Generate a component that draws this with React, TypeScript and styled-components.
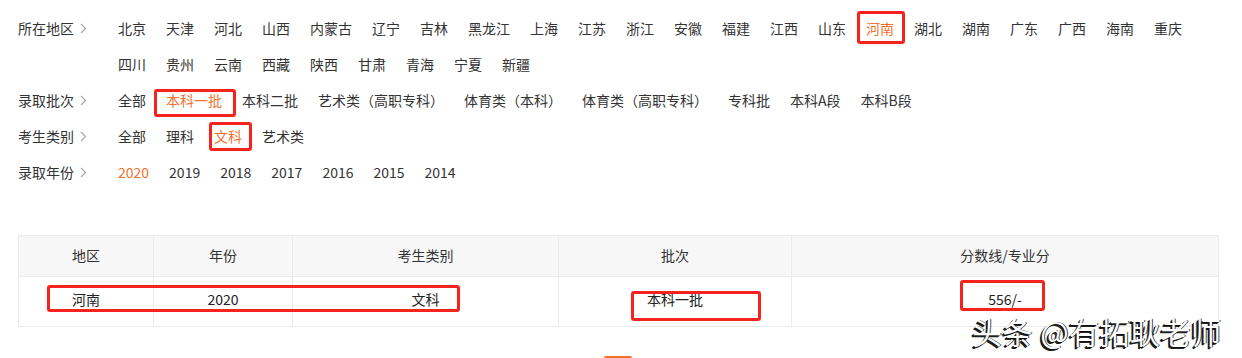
import styled, { createGlobalStyle } from "styled-components";

const GlobalStyle = createGlobalStyle`
  html, body {
    margin: 0;
    padding: 0;
    background: #fff;
  }
  body {
    font-family: "Noto Sans CJK SC", "Noto Sans", sans-serif;
    font-size: 14px;
    color: #333;
  }
`;

const orange = "#f2722c";
const markRed = "#f5231e";

const regions = [
  "北京", "天津", "河北", "山西", "内蒙古", "辽宁", "吉林", "黑龙江", "上海", "江苏",
  "浙江", "安徽", "福建", "江西", "山东", "河南", "湖北", "湖南", "广东", "广西",
  "海南", "重庆", "四川", "贵州", "云南", "西藏", "陕西", "甘肃", "青海", "宁夏", "新疆",
];
const batches = [
  "全部", "本科一批", "本科二批", "艺术类（高职专科）", "体育类（本科）",
  "体育类（高职专科）", "专科批", "本科A段", "本科B段",
];
const types = ["全部", "理科", "文科", "艺术类"];
const years = ["2020", "2019", "2018", "2017", "2016", "2015", "2014"];

const filters = [
  { label: "所在地区", items: regions, active: "河南" },
  { label: "录取批次", items: batches, active: "本科一批" },
  { label: "考生类别", items: types, active: "文科" },
  { label: "录取年份", items: years, active: "2020" },
];

const columns = [
  { title: "地区", width: 135, value: "河南" },
  { title: "年份", width: 139, value: "2020" },
  { title: "考生类别", width: 266, value: "文科" },
  { title: "批次", width: 233, value: "本科一批" },
  { title: "分数线/专业分", width: 427, value: "556/-" },
];

// annotation boxes drawn over the screenshot
const marks = [
  { x: 857, y: 11, w: 48, h: 33 },
  { x: 154, y: 89, w: 82, h: 28 },
  { x: 209, y: 122, w: 43, h: 29 },
  { x: 47, y: 285, w: 413, h: 27 },
  { x: 631, y: 291, w: 130, h: 30 },
  { x: 960, y: 280, w: 85, h: 31 },
];

const Page = styled.div`
  position: relative;
  width: 1242px;
  height: 358px;
  overflow: hidden;
`;

const Content = styled.div`
  width: 1200px;
  margin-left: 18px;
  padding-top: 10px;
`;

const FilterRow = styled.div`
  display: flex;
  align-items: flex-start;
`;

const Label = styled.div`
  width: 100px;
  flex: none;
  display: flex;
  align-items: center;
  gap: 6px;
  height: 36px;
  color: #333;
`;

const Items = styled.div`
  flex: 1;
  display: flex;
  flex-wrap: wrap;
`;

const Item = styled.span<{ $active?: boolean }>`
  line-height: 36px;
  height: 36px;
  margin-right: 20px;
  white-space: nowrap;
  color: ${(p) => (p.$active ? orange : "#333")};
  cursor: pointer;
`;

const Table = styled.table`
  margin-top: 45px;
  width: 1200px;
  border-collapse: collapse;
  table-layout: fixed;
`;

const Th = styled.th`
  height: 41px;
  background: #f7f7f7;
  border: 1px solid #ebebeb;
  font-weight: normal;
  color: #333;
  text-align: center;
  padding: 0 0 2px;
  box-sizing: border-box;
`;

const Td = styled.td`
  height: 50px;
  border: 1px solid #ebebeb;
  text-align: center;
  color: #222;
  line-height: 18px;
  padding: 0 0 6px;
  box-sizing: border-box;
`;

const Pager = styled.div`
  display: flex;
  justify-content: center;
  margin-top: 29px;
`;

const PageButton = styled.div`
  width: 28px;
  height: 28px;
  border-radius: 2px;
  background: ${orange};
`;

const Mark = styled.div`
  position: absolute;
  box-sizing: border-box;
  border: 3px solid ${markRed};
  border-radius: 3px;
  pointer-events: none;
`;

const Watermark = styled.div`
  position: absolute;
  left: 972px;
  top: 316px;
  font-size: 30px;
  line-height: 30px;
  letter-spacing: 0.5px;
  color: #fff;
  white-space: nowrap;
  text-shadow: -1px 1px 0 #111, -2px 2px 0 #222, 1px 0 0 #444;
`;

const Chevron = () => (
  <svg width="7" height="11" viewBox="0 0 7 11">
    <polyline points="1,1 5.5,5.5 1,10" fill="none" stroke="#a8a8a8" strokeWidth="1.2" />
  </svg>
);

export default function App() {
  return (
    <Page>
      <GlobalStyle />
      <Content>
        {filters.map((f) => (
          <FilterRow key={f.label}>
            <Label>
              {f.label}
              <Chevron />
            </Label>
            <Items>
              {f.items.map((it) => (
                <Item key={it} $active={it === f.active}>
                  {it}
                </Item>
              ))}
            </Items>
          </FilterRow>
        ))}

        <Table>
          <colgroup>
            {columns.map((c) => (
              <col key={c.title} style={{ width: c.width }} />
            ))}
          </colgroup>
          <thead>
            <tr>
              {columns.map((c) => (
                <Th key={c.title}>{c.title}</Th>
              ))}
            </tr>
          </thead>
          <tbody>
            <tr>
              {columns.map((c) => (
                <Td key={c.title}>{c.value}</Td>
              ))}
            </tr>
          </tbody>
        </Table>

        <Pager>
          <PageButton />
        </Pager>
      </Content>

      {marks.map((m, i) => (
        <Mark key={i} style={{ left: m.x, top: m.y, width: m.w, height: m.h }} />
      ))}
      <Watermark>头条 @有拓耿老师</Watermark>
    </Page>
  );
}
